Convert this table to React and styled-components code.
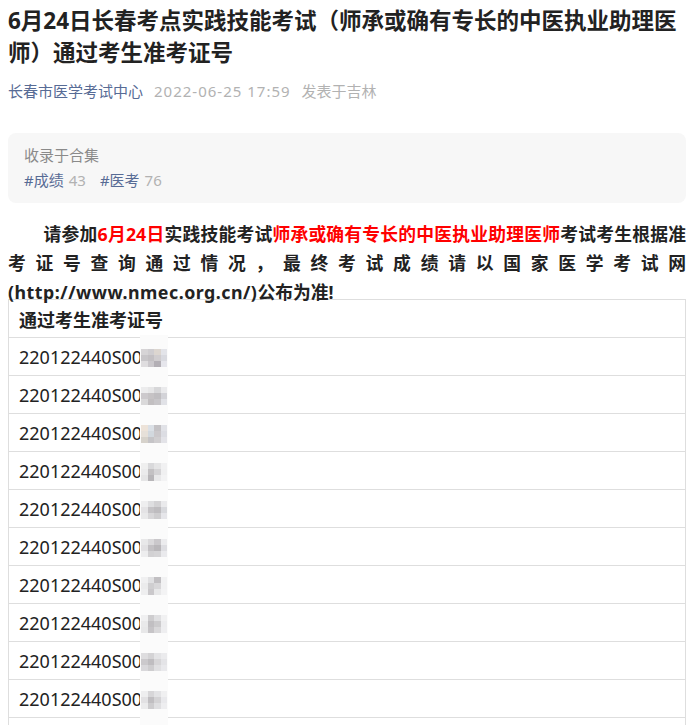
import React from "react";
import styled, { createGlobalStyle } from "styled-components";

const Global = createGlobalStyle`
  html, body { margin: 0; padding: 0; background: #fff; }
  body { font-family: "Noto Sans", "Noto Sans CJK SC", sans-serif; color: #222; }
`;

const Page = styled.div`
  padding: 5px 8px 0 8px;
  width: 678px;
  overflow: hidden;
`;

const Title = styled.h1`
  margin: 0;
  font-size: 22.5px;
  line-height: 32px;
  font-weight: 700;
  color: #222;
`;

const Meta = styled.div`
  display: flex;
  gap: 11px;
  margin-top: 11px;
  font-size: 15px;
  line-height: 22px;
`;

const MetaItem = styled.span`
  color: ${(p) => (p.$link ? "#576b95" : "#b2b2b2")};
  letter-spacing: ${(p) => (p.$spaced ? "1px" : "0")};
`;

const Collection = styled.div`
  margin-top: 31px;
  background: #f7f7f7;
  border-radius: 8px;
  padding: 11px 16px 12px;
  display: flex;
  flex-direction: column;
  gap: 3px;
`;

const CollLabel = styled.div`
  font-size: 15px;
  line-height: 22px;
  color: #8a8a8a;
`;

const Tags = styled.div`
  display: flex;
  gap: 14px;
  font-size: 15px;
  line-height: 22px;
`;

const Tag = styled.span`
  color: #576b95;
`;

const Count = styled.span`
  color: #b2b2b2;
  margin-left: 5px;
`;

const Para = styled.p`
  margin: 17px 0 -8px;
  font-size: 17.8px;
  line-height: 29px;
  font-weight: 700;
  text-indent: 2em;
  text-align: justify;
  color: #222;
`;

const Red = styled.span`
  color: #ff0000;
`;

const NoWrap = styled.span`
  white-space: nowrap;
`;

const Url = styled.span`
  letter-spacing: 0.5px;
`;

const Table = styled.div`
  border: 1px solid #dedede;
  border-bottom: none;
  display: flex;
  flex-direction: column;
`;

const Row = styled.div`
  height: 37px;
  border-bottom: 1px solid #dedede;
  display: flex;
  align-items: center;
  padding-left: 10px;
  font-size: 18px;
  font-weight: ${(p) => (p.$head ? 700 : 400)};
  color: #222;
`;

const Mosaic = styled.span`
  position: relative;
  z-index: 1;
  display: inline-grid;
  grid-template-columns: repeat(4, 6.5px);
  grid-template-rows: repeat(3, 6px);
  margin-left: -1px;
  margin-top: 2px;
  &::before {
    content: "";
    position: absolute;
    left: -1px;
    width: 28px;
    top: -14px;
    bottom: -14px;
    background: #fbfbfb;
    z-index: -1;
  }
`;

const Cell = styled.span`
  width: 6.5px;
  height: 6px;
`;

const palettes = [
  ["#d6d4d6", "#cfcdd0", "#dcd6d0", "#e3e4e9", "#c8c6c9", "#c3c0c3", "#d0cdcf", "#d9dae0", "#dfdddf", "#cbc8cc", "#b3afb5", "#e6e6ec"],
  ["#ececed", "#e6e6e7", "#d7d7d9", "#eaeaec", "#ccc9cc", "#c6c3c5", "#c0bec1", "#d3d3d8", "#dad9da", "#c2bfc1", "#c8c6c9", "#e1e2e7"],
  ["#ede3d9", "#dbe0e6", "#c4c2c5", "#e1e2e7", "#e6e0d9", "#d2d8de", "#cbc8cb", "#dcdde3", "#d6d2cb", "#c5c4c7", "#d0ced0", "#e3e3e8"],
  ["#efefef", "#d9d9db", "#e5e5e6", "#f1f1f2", "#ebebec", "#c3c1c3", "#d5d4d6", "#f0f0f1", "#e5e5e6", "#b8b6b9", "#e9e9ea", "#f3f3f4"],
  ["#eeeeef", "#dedee0", "#d3d2d4", "#eaeaec", "#e4e3e5", "#c5c3c6", "#bebcbf", "#d8d9dd", "#e9e9ea", "#d8d7d9", "#cecdcf", "#e6e6ea"],
  ["#e8e8e9", "#dad9db", "#cac8cb", "#ececee", "#e2e1e3", "#c3c1c4", "#b9b7ba", "#dedee2", "#ededee", "#d2d1d3", "#d5d4d6", "#eaeaed"],
  ["#f0f0f1", "#e0e0e2", "#c1bfc2", "#f2f2f3", "#ebebec", "#cfced0", "#d8d7d9", "#f2f2f3", "#eeeeef", "#cac8cb", "#e8e8e9", "#f3f3f4"],
  ["#f0f0f1", "#cecdcf", "#e0e0e2", "#f1f1f2", "#e9e9ea", "#c1bfc2", "#cccbcd", "#ededef", "#e7e7e8", "#c6c4c7", "#d9d8da", "#eeeef0"],
  ["#dedddf", "#d4d3d5", "#e4e4e6", "#ebebed", "#cbc9cc", "#bfbdc0", "#d7d6d8", "#e4e4e7", "#d9d8db", "#cecdcf", "#e0e0e2", "#e9e9ec"],
  ["#eeeeef", "#d7d6d8", "#e3e3e5", "#f0f0f1", "#e2e1e3", "#c0bec1", "#d4d3d5", "#e9e9ec", "#ebebec", "#cdccce", "#dfdfe1", "#eeeef0"],
  ["#e5e5e7", "#d1d0d2", "#cac8cb", "#e8e8eb", "#d8d7d9", "#c4c2c5", "#cecdcf", "#e2e2e6", "#e6e6e7", "#d0cfd1", "#d7d6d8", "#e7e7ea"],
];

const rows = Array.from({ length: 11 }, (_, i) => i);

export default function App() {
  return (
    <>
      <Global />
      <Page>
        <Title>6月24日长春考点实践技能考试（师承或确有专长的中医执业助理医师）通过考生准考证号</Title>
        <Meta>
          <MetaItem $link>长春市医学考试中心</MetaItem>
          <MetaItem $spaced>2022-06-25 17:59</MetaItem>
          <MetaItem>发表于吉林</MetaItem>
        </Meta>
        <Collection>
          <CollLabel>收录于合集</CollLabel>
          <Tags>
            <span>
              <Tag>#成绩</Tag>
              <Count>43</Count>
            </span>
            <span>
              <Tag>#医考</Tag>
              <Count>76</Count>
            </span>
          </Tags>
        </Collection>
        <Para>
          请参加<Red>6月24日</Red>实践技能考试<Red>师承或确有专长的中医执业助理医师</Red>考试考生根据准考证号查询通过情况，最终考试成绩请以国家医学考试网
          <NoWrap>
            <Url>(http://www.nmec.org.cn/)</Url>公布为准!
          </NoWrap>
        </Para>
        <Table>
          <Row $head>通过考生准考证号</Row>
          {rows.map((i) => (
            <Row key={i}>
              220122440S00
              <Mosaic>
                {palettes[i].map((c, j) => (
                  <Cell key={j} style={{ background: c }} />
                ))}
              </Mosaic>
            </Row>
          ))}
        </Table>
      </Page>
    </>
  );
}
